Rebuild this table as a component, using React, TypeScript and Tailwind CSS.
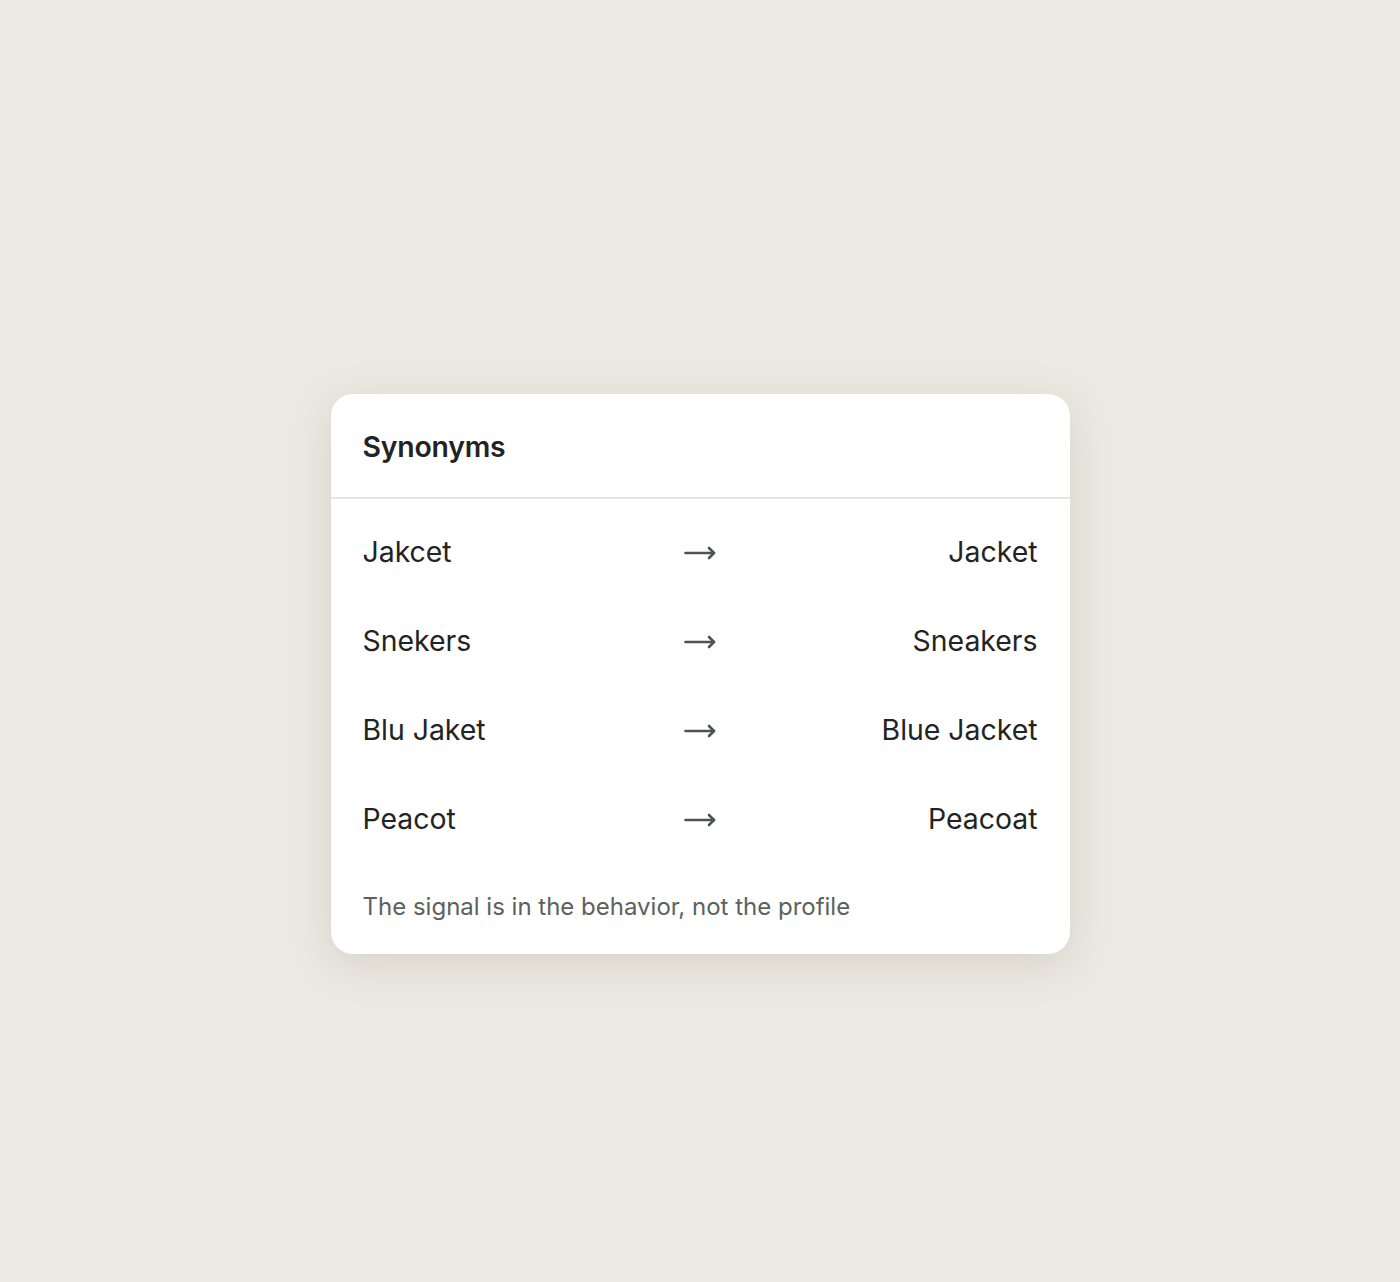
import React from "react";

const rows = [
  ["Jakcet", "Jacket"],
  ["Snekers", "Sneakers"],
  ["Blu Jaket", "Blue Jacket"],
  ["Peacot", "Peacoat"],
];

function Arrow() {
  return (
    <svg width="32" height="14" viewBox="0 0 32 14" fill="none" className="block">
      <path d="M1.5 7H30" stroke="#4a5550" strokeWidth="2.6" strokeLinecap="round" />
      <path d="M25 2L30 7L25 12" stroke="#4a5550" strokeWidth="2.6" strokeLinecap="round" strokeLinejoin="round" />
    </svg>
  );
}

export default function App() {
  return (
    <div
      className="min-h-[1282px] w-full bg-[#ece9e2] flex justify-center pt-[394px]"
      style={{ fontFamily: "Inter, 'Noto Sans', sans-serif" }}
    >
      <div className="w-[739px] h-[560px] bg-white rounded-[22px] shadow-[0_10px_40px_rgba(120,110,90,0.18)] flex flex-col">
        <div className="px-8 h-[105px] pt-[4px] flex items-center border-b-2 border-[#e7e5de]">
          <h2 className="text-[28.4px] font-semibold text-[#222423] tracking-[-0.2px]">Synonyms</h2>
        </div>
        <div className="px-8 pt-[9px] flex flex-col">
          {rows.map(([a, b]) => (
            <div key={a} className="grid grid-cols-[1fr_auto_1fr] items-center h-[89px]">
              <span className="text-[28.4px] text-[#222423]">{a}</span>
              <Arrow />
              <span className="text-[28.4px] text-[#222423] text-right">{b}</span>
            </div>
          ))}
        </div>
        <p className="px-8 mt-[25px] text-[24px] text-[#5b625e]">The signal is in the behavior, not the profile</p>
      </div>
    </div>
  );
}
